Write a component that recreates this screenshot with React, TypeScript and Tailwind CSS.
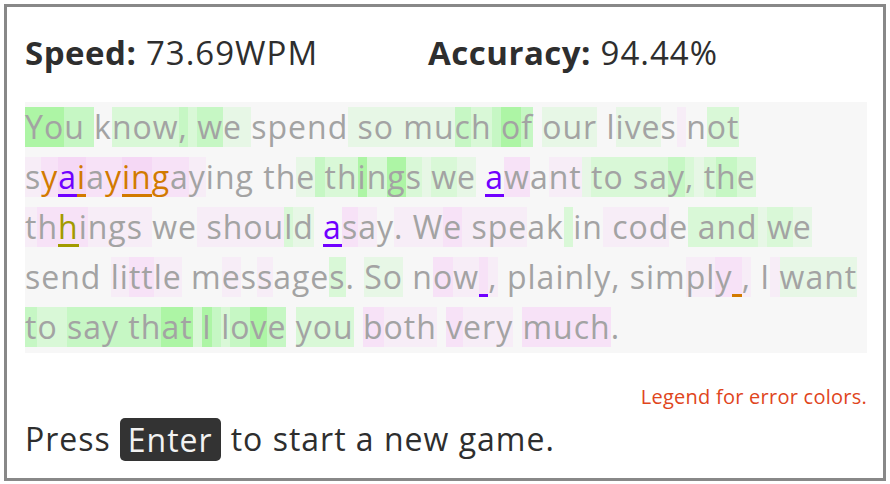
import React from "react";

type Seg = [string, string, string?];

// bg codes: K strongest green .. g faint green, Q strongest pink .. p faint pink
const BG: Record<string, string> = {
  K: "bg-[#adf5a5]",
  H: "bg-[#c6f7c4]",
  G: "bg-[#d9f8d7]",
  g: "bg-[#e7f7e6]",
  Q: "bg-[#f5d8f5]",
  P: "bg-[#f7e2f7]",
  p: "bg-[#f7edf7]",
};

// error codes: o orange, O orange underlined, v purple underlined, h olive underlined
const ERR: Record<string, string> = {
  o: "text-[#d27a00]",
  O: "text-[#d27a00] shadow-[inset_0_-3px_0_#d27a00]",
  v: "text-[#7000ff] shadow-[inset_0_-3px_0_#7000ff]",
  h: "text-[#a29b00] shadow-[inset_0_-3px_0_#a29b00]",
};

const LINES: Seg[][] = [
  [
    ["Yo", "K"], ["u ", "H"], ["k", ""], ["now", "G"], [",", "H"], [" ", "G"], ["w", "H"], ["e ", "g"],
    ["spend", ""], [" so mu", "g"], ["c", "H"], ["h", "G"], [" ", "H"], ["o", "K"], ["f", "H"], [" ", ""],
    ["our", "g"], [" l", ""], ["ive", "g"], ["s", ""], [" ", "p"], ["n", ""], ["ot", "G"],
  ],
  [
    ["s", "p"], ["y", "P", "o"], ["a", "Q", "v"], ["i", "Q", "O"], ["a", "P"], ["y", "P", "o"],
    ["in", "Q", "O"], ["g", "P", "o"], ["a", "P"], ["y", "p"], ["ing th", ""], ["e", "g"], [" ", "H"],
    ["th", "G"], ["i", "K"], ["n", "G"], ["g", "K"], ["s", "G"], [" ", "g"], ["w", "G"], ["e", "g"],
    [" ", ""], ["a", "", "v"], ["w", "P"], ["a", ""], ["nt", "p"], [" ", "g"], ["to sa", "G"], ["y", "H"],
    [",", "G"], [" ", "g"], ["t", "G"], ["h", "H"], ["e", "G"],
  ],
  [
    ["t", "p"], ["h", "P"], ["h", "P", "h"], ["i", "P"], ["ngs ", "p"], ["we", ""], [" shou", "p"],
    ["l", "G"], ["d", "g"], [" ", ""], ["a", "", "v"], ["s", "P"], ["a", "p"], ["y", ""], [". ", "p"],
    ["W", "p"], ["e", "P"], [" spe", "p"], ["ak", ""], [" ", "G"], ["in", ""], [" cod", "p"], ["e", ""],
    [" and", "G"], [" ", "g"], ["w", "G"], ["e", "g"],
  ],
  [
    ["send ", ""], ["li", "p"], ["tt", "P"], ["le", "p"], [" m", ""], ["e", "p"], ["s", ""], ["s", "p"],
    ["age", ""], ["s", "G"], [". ", ""], ["So", "g"], [" n", ""], ["o", "P"], ["w", "p"], [" ", "P", "v"],
    [",", "p"], [" plainly, sim", ""], ["pl", "p"], ["y", "P"], [" ", "P", "O"], [",", "p"], [" I", ""],
    [" ", "p"], ["want", "g"],
  ],
  [
    ["t", "H"], ["o ", "G"], ["say th", "H"], ["at", "K"], [" ", "G"], ["I", "K"], [" ", "H"], ["l", "G"],
    ["o", "H"], ["v", "K"], ["e", "H"], [" ", ""], ["you", "G"], [" ", ""], ["b", "P"], ["oth", "p"],
    [" ", ""], ["v", "P"], ["er", "p"], ["y", "p"], [" ", ""], ["much", "P"], [".", ""],
  ],
];

function Line({ segs }: { segs: Seg[] }) {
  return (
    <div className="flex h-[40px]">
      {segs.map(([text, bg, err], i) => (
        <span
          key={i}
          className={`h-[40px] whitespace-pre leading-[40px] ${BG[bg] ?? ""} ${err ? ERR[err] : ""}`}
        >
          {text}
        </span>
      ))}
    </div>
  );
}

export default function App() {
  return (
    <div className="h-[484px] w-[890px] bg-white p-[4px] font-['Open_Sans',sans-serif]">
      <div className="flex h-[477px] flex-col border-[3px] border-[#888888] pl-[18px] pr-[16px] pt-[23px]">
        <div className="flex h-[46px] items-center text-[33px] tracking-[1px] text-[#2e2e2e]">
          <p className="w-[403px] shrink-0">
            <span className="font-bold tracking-[0.5px]">Speed:</span> 73.69WPM
          </p>
          <p>
            <span className="font-bold tracking-[0.5px]">Accuracy:</span> 94.44%
          </p>
        </div>

        <div className="mt-[26px] flex flex-col gap-[10px] bg-[#f7f7f7] pb-[6px] pt-[5px] text-[32px] tracking-[1px] text-[#a3a3a3]">
          {LINES.map((segs, i) => (
            <Line key={i} segs={segs} />
          ))}
        </div>

        <p className="mt-[32px] text-right text-[20px] leading-[24px] tracking-[0.25px] text-[#e0451c]">
          Legend for error colors.
        </p>

        <div className="mt-[6px] flex items-center text-[32px] tracking-[1px] text-[#2e2e2e]">
          <span>Press</span>
          <span className="ml-[9px] mr-[10px] rounded-[5px] bg-[#333333] px-[8px] leading-[43px] text-[#f2f2f2]">
            Enter
          </span>
          <span>to start a new game.</span>
        </div>
      </div>
    </div>
  );
}
